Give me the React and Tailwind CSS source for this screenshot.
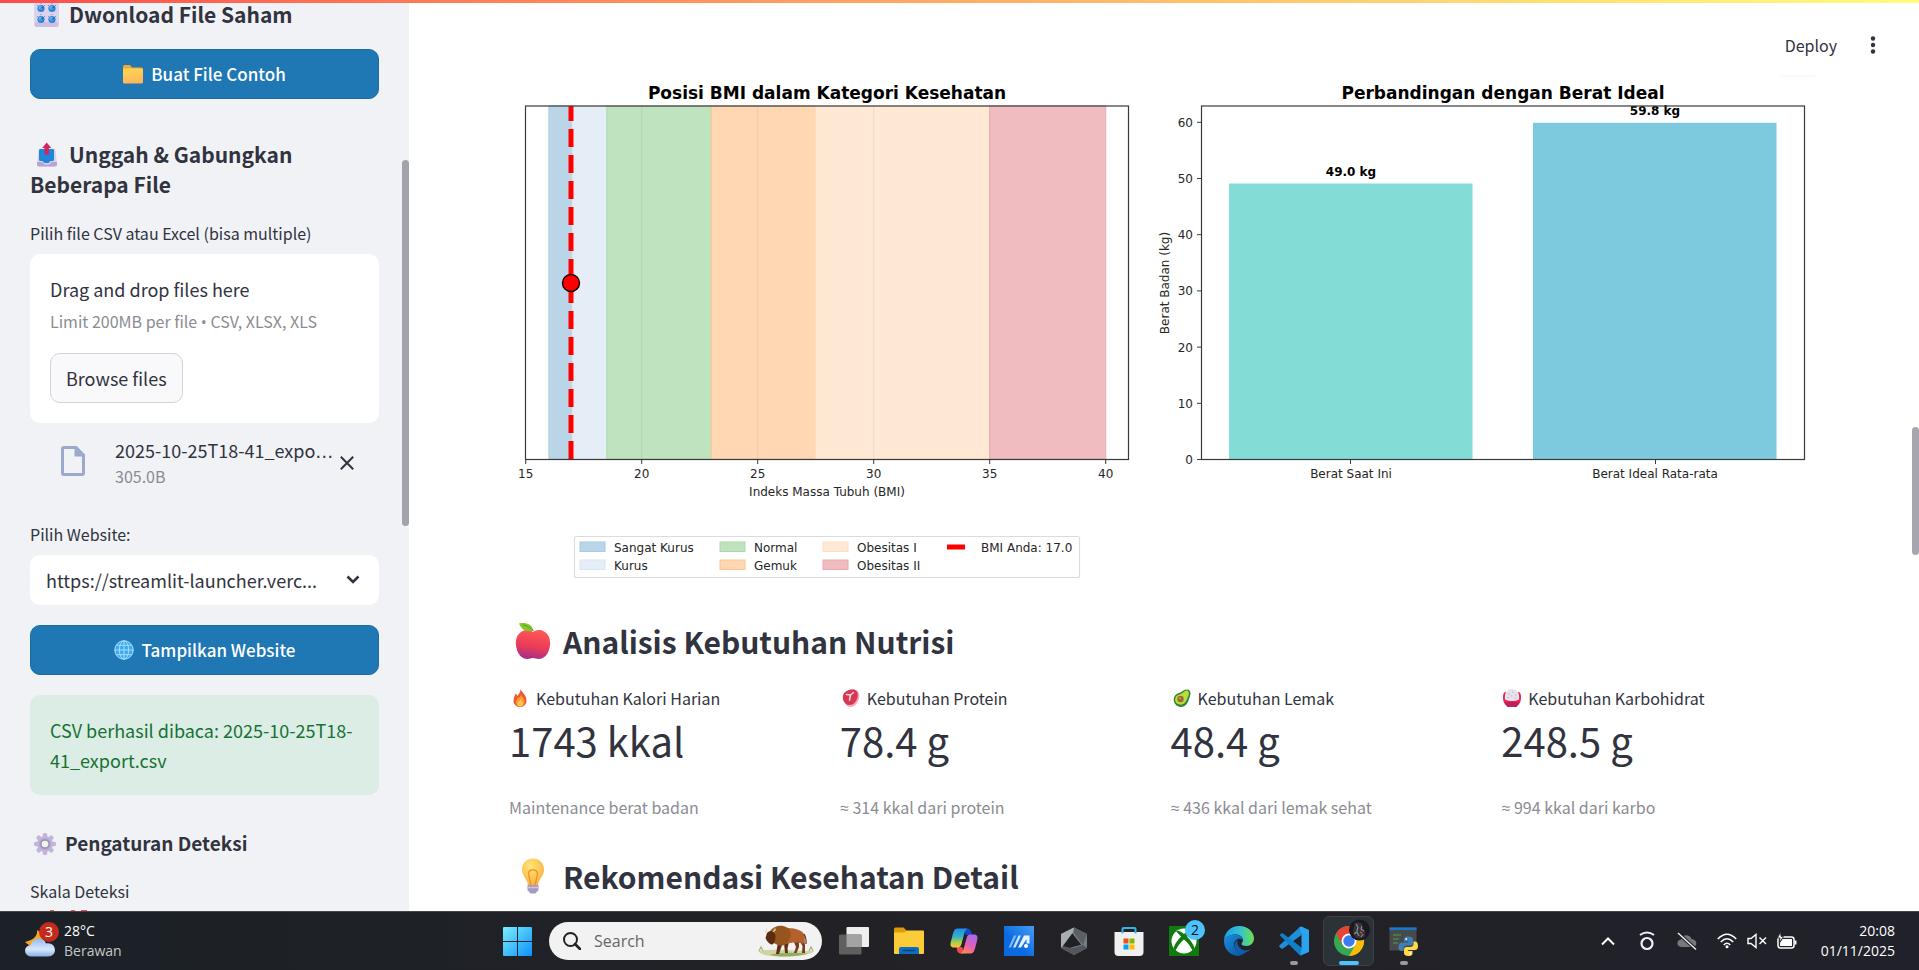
const sans = "font-['Noto_Sans_CJK_SC','Open_Sans',sans-serif]";
const segoe = "font-['Open_Sans','Noto_Sans',sans-serif]";

/* ---------- emoji drawings ---------- */

function KnobsIcon() {
  return (
    <svg viewBox="0 0 25 25" className="ml-1 mr-2.5 inline-block h-[25px] w-[25px] align-[-4px]" aria-hidden="true">
      <rect x="0" y="0" width="25" height="25" rx="3.5" fill="#ddd2ec" />
      <rect x="0.5" y="20" width="24" height="5" rx="2.5" fill="#cdbfe2" />
      {[[7, 6.5], [18, 6.5], [7, 17.5], [18, 17.5]].map(([x, y]) => (
        <g key={`${x}-${y}`}>
          <path d={`M${x - 4} ${y - 3.5}l1 1M${x} ${y - 5.5}v1.2M${x + 4} ${y - 3.5}l-1 1`} stroke="#8d80a5" strokeWidth="0.9" />
          <circle cx={x} cy={y} r="3.6" fill="#2e86d8" />
          <circle cx={x - 0.6} cy={y - 0.8} r="1.9" fill="#5bb3f3" />
          <path d={`M${x} ${y}l2 -2`} stroke="#123e78" strokeWidth="1" />
        </g>
      ))}
    </svg>
  );
}

function FolderIcon() {
  return (
    <svg viewBox="0 0 20 20" className="h-5 w-5" aria-hidden="true">
      <defs>
        <linearGradient id="folderFill" x1="0" y1="0" x2="0.3" y2="1">
          <stop offset="0" stopColor="#ffd84f" />
          <stop offset="1" stopColor="#fdb75a" />
        </linearGradient>
      </defs>
      <path d="M0 2.5Q0 1 1.5 1H7l2 2.5h9.500Q20 3.500 20 5V10H0z" fill="#f3a73a" />
      <path d="M0 5.500Q0 4.500 1.200 4.500H18.500Q20 4.500 20 6V18Q20 19.500 18.500 19.500H1.500Q0 19.500 0 18z" fill="url(#folderFill)" />
    </svg>
  );
}

function OutboxIcon() {
  return (
    <svg viewBox="0 0 25 25" className="ml-1 mr-2.5 inline-block h-[25px] w-[25px] align-[-4px]" aria-hidden="true">
      <path d="M4.500 8Q4.500 6.500 6 6.500H20Q21.500 6.500 21.500 8L23 22Q23 24.500 21 24.500H5Q3 24.500 3 22z" fill="#d9d3e6" />
      <path d="M3 20H8.500l2 2.500h5l2-2.500H23V22.500Q23 24.500 21 24.500H5Q3 24.500 3 22.500z" fill="#b9a2d8" />
      <path d="M5 8.500Q5 7 6.500 7H18.500Q20 7 20 8.500V17.500Q20 19 18.500 19H16.500L14.500 21H10.500L8.500 19H6.500Q5 19 5 17.500z" fill="#1f86d9" />
      <path d="M12.700 0.500L17.300 6H14.900V12.500H10.500V6H8.200z" fill="#d6245d" />
    </svg>
  );
}

function GlobeIcon() {
  return (
    <svg viewBox="0 0 20 20" className="h-5 w-5" aria-hidden="true">
      <circle cx="10" cy="10" r="10" fill="#2f8fdc" />
      <circle cx="10" cy="10" r="9" fill="#3fa9ee" />
      <g fill="none" stroke="#a5dcfb" strokeWidth="1">
        <circle cx="10" cy="10" r="9.200" />
        <ellipse cx="10" cy="10" rx="4.600" ry="9.200" />
        <path d="M10 .8V19.200M.8 10H19.200M2.500 5.300H17.500M2.500 14.700H17.500" />
      </g>
    </svg>
  );
}

function GearIcon() {
  return (
    <svg viewBox="0 0 22 22" className="ml-1 mr-[9px] inline-block h-[22px] w-[22px] align-[-4px]" aria-hidden="true">
      <g fill="#c3b4dc">
        {[0, 45, 90, 135, 180, 225, 270, 315].map((a) => (
          <rect key={a} x="8.800" y="0" width="4.400" height="6" rx="1.600" transform={`rotate(${a} 11 11)`} />
        ))}
        <circle cx="11" cy="11" r="8" />
      </g>
      <circle cx="11" cy="11" r="6" fill="#b3a7c8" />
      <circle cx="11" cy="11" r="4.800" fill="#9d93b0" />
      <circle cx="11" cy="11" r="3.300" fill="#f0f2f6" />
    </svg>
  );
}

function AppleIcon() {
  return (
    <svg viewBox="0 0 36 36" className="h-9 w-9" aria-hidden="true">
      <defs>
        <linearGradient id="appleFill" x1="0.600" y1="0" x2="0.400" y2="1">
          <stop offset="0" stopColor="#ff5a55" />
          <stop offset="0.600" stopColor="#e93a5a" />
          <stop offset="1" stopColor="#a22f8c" />
        </linearGradient>
      </defs>
      <path d="M18 9C21 6.500 26 6 30 9C35 12.500 36 19 34.500 25C33 32 28.500 36 24 36C21 36 20 35 18 35S15 36 12 36C7.500 36 3 32 1.500 25C0 19 1 12.500 6 9C10 6 15 6.500 18 9Z" fill="url(#appleFill)" />
      <path d="M4 0.500C10 -0.800 17 0.500 18.500 8C12 9 7 8 4 0.500Z" fill="#86c62f" />
      <path d="M8 2C13 3 16 5 18.500 8" stroke="#5f9d22" strokeWidth="1" fill="none" />
    </svg>
  );
}

function BulbIcon() {
  return (
    <svg viewBox="0 0 24 36" className="h-9 w-9" aria-hidden="true">
      <defs>
        <radialGradient id="bulbFill" cx="0.400" cy="0.300" r="0.750">
          <stop offset="0" stopColor="#ffe47a" />
          <stop offset="1" stopColor="#fbb03b" />
        </radialGradient>
      </defs>
      <path d="M12 0.500C18.500 0.500 23 5.300 23 11.500C23 18 18 20.500 17 27H7C6 20.500 1 18 1 11.500C1 5.300 5.500 0.500 12 0.500Z" fill="url(#bulbFill)" />
      <path d="M10 27L7.500 16C7.500 10.500 16.500 10.500 16.500 16L14 27" fill="none" stroke="#e8912b" strokeWidth="1.200" />
      <path d="M6.500 27H17.500V32Q17.500 33 16 33.500L14.500 35.500H9.500L8 33.500Q6.500 33 6.500 32z" fill="#a99abf" />
      <path d="M6.500 29.500H17.500" stroke="#cdc3dc" strokeWidth="1.500" />
    </svg>
  );
}

function FireIcon() {
  return (
    <svg viewBox="0 0 18 18" className="h-[18px] w-[18px]" aria-hidden="true">
      <path d="M9.500 0C10.500 3 15.500 6 15.500 11.500C15.500 15.500 12.500 18 9 18S2.500 15.500 2.500 11.500C2.500 8.500 4 7 4.500 4.500C5.500 5 6 6 6.200 7C8 5 9.500 3 9.500 0Z" fill="#ee5a33" />
      <path d="M10 5.500C10.500 8 14 9.500 13.500 13C13 16.500 11 17.500 9 17.500S5 16 5 13C5 11 6.500 10.500 6.800 8.500C8 9 9.500 8 10 5.500Z" fill="#fb9b3a" />
      <path d="M9.500 10C10 12 12 12.500 12 14.500C12 16.500 10.500 17.500 9 17.500S6.500 16.500 6.500 14.700C6.500 12.500 9 12.500 9.500 10Z" fill="#fcc84a" />
    </svg>
  );
}

function MeatIcon() {
  return (
    <svg viewBox="0 0 18 18" className="h-[18px] w-[18px]" aria-hidden="true">
      <path d="M2 8C2 3 7 0 12 0.500C16.500 1 18 4.500 17 9C16 14 12.500 18 8 18C4 18 2 13 2 8Z" fill="#f4a7b4" />
      <path d="M1 6.500C2 2.500 7 0 11 0.500C15 1 16.500 4 15.500 8C14.500 12.500 11.500 16 7.500 16C3 16 0 11 1 6.500Z" fill="#d93654" />
      <path d="M4.500 5.500L8.500 6L11.500 3.500M8.500 6L7.500 11" stroke="#fbdbe0" strokeWidth="1.600" fill="none" strokeLinecap="round" />
    </svg>
  );
}

function AvocadoIcon() {
  return (
    <svg viewBox="0 0 18 18" className="h-[18px] w-[18px]" aria-hidden="true">
      <path d="M14 0.500C17.500 0.500 18 4 17 7C16 10 15.500 12 14 14.500C12 18 7 19 3.500 16.500C0 13.500 0 8.500 2.500 6C5 4 7 4 9 2.500C10.500 1.300 12 0.500 14 0.500Z" fill="#2f7f35" />
      <path d="M13.300 1.500C16 1.500 16.500 4 15.500 6.500C14.500 9 14 11 12.500 13C10.500 15.800 7 16.500 4 14.500C1.500 12.500 1.500 9 3.500 7C5.500 5.200 8 5.200 10 3.500C11 2.500 12 1.500 13.300 1.500Z" fill="#b9dd3c" />
      <circle cx="7.500" cy="10" r="3.200" fill="#9a6a35" />
      <circle cx="7" cy="9.300" r="1.200" fill="#c08f56" />
    </svg>
  );
}

function RiceIcon() {
  return (
    <svg viewBox="0 0 18 18" className="h-[18px] w-[18px]" aria-hidden="true">
      <path d="M0 8C0 4.500 1 3 3 3H15C17 3 18 4.500 18 8C18 13 16.500 15 14.500 16.500Q14 18 12.500 18H5.500Q4 18 3.500 16.500C1.500 15 0 13 0 8Z" fill="#e8244f" />
      <path d="M1.500 13H16.500Q15.700 15.500 14.500 16.500Q14 18 12.500 18H5.500Q4 18 3.500 16.500Q2.200 15.500 1.500 13Z" fill="#bf2060" />
      <path d="M2 10.500C1 3.500 4.500 0 9 0S17 3.500 16 10.500Q13 12 9 12T2 10.500Z" fill="#e9e2ef" />
      <path d="M5 5h1.500M9 3h1.500M12 6h1.500M8 7h1.500M4.500 8.500h1.500M11.500 9h1.500" stroke="#b9aec8" strokeWidth="1" />
    </svg>
  );
}

/* ---------- sidebar ---------- */

function PrimaryButton({ icon, children }) {
  return (
    <button className="flex h-[50px] w-full items-center justify-center gap-2 rounded-[10px] border border-[#1c6ba2] bg-[#1f77b4] text-[17px] leading-[30px] font-medium text-white">
      {icon}
      {children}
    </button>
  );
}

function Sidebar() {
  return (
    <aside className="flex w-[409px] shrink-0 bg-[#f0f2f6] text-[#31333f]">
      <div className="-mt-px min-w-0 flex-1 pl-[30px] pr-[23px]">
        <h3 className="text-[21px] leading-[30px] font-bold"><KnobsIcon />Dwonload File Saham</h3>
        <div className="mt-5">
          <PrimaryButton icon={<FolderIcon />}>Buat File Contoh</PrimaryButton>
        </div>

        <h3 className="mt-10 text-[21px] leading-[30px] font-bold"><OutboxIcon />Unggah &amp; Gabungkan Beberapa File</h3>

        <p className="mt-[22px] text-base leading-6">Pilih file CSV atau Excel (bisa multiple)</p>
        <section className="mt-[9px] rounded-[10px] bg-white p-5">
          <p className="text-lg leading-[30px]">Drag and drop files here</p>
          <p className="mt-[5px] h-6 text-base leading-6 text-[#8b8c94]">Limit 200MB per file <span className={`leading-none ${segoe}`}>•</span> CSV, XLSX, XLS</p>
          <button className="mt-5 h-[50px] rounded-[10px] border border-[#d3d4d9] bg-[#f9f9fb] px-[15px] text-lg leading-[30px]">Browse files</button>
        </section>

        <div className="flex h-[99px] items-start pl-[31px] pr-[25px] pt-[13px]">
          <svg viewBox="0 0 24 30" className="mt-2.5 h-[30px] w-6 shrink-0" aria-hidden="true">
            <path d="M3 1.500H15L22.500 9V27Q22.500 28.500 21 28.500H3Q1.500 28.500 1.500 27V3Q1.500 1.500 3 1.500Z" fill="none" stroke="#9aa9cc" strokeWidth="3" />
            <path d="M13.500 0.500H15.500L24 9V10.500H13.500Z" fill="#9aa9cc" />
          </svg>
          <div className="ml-[30px] min-w-0 flex-1 whitespace-nowrap">
            <p className="h-7 text-lg leading-7">2025-10-25T18-41_expo<span className="leading-none font-['DejaVu_Sans',sans-serif]">…</span></p>
            <p className="text-base leading-6 text-[#8b8c94]">305.0B</p>
          </div>
          <button aria-label="Hapus file" className="mt-5 flex h-[14px] w-[14px] shrink-0">
            <svg viewBox="0 0 14 14" className="h-[14px] w-[14px]"><path d="M0.800 0.800L13.200 13.200M13.200 0.800L0.800 13.200" stroke="#31333f" strokeWidth="2" /></svg>
          </button>
        </div>

        <label htmlFor="website" className="block text-base leading-6">Pilih Website:</label>
        <div className="relative mt-[9px]">
          <select id="website" className="block h-[50px] w-full appearance-none rounded-[10px] bg-white pl-4 pr-12 text-lg leading-[30px]">
            <option>https://streamlit-launcher.verc...</option>
          </select>
          <svg viewBox="0 0 14 9" className="pointer-events-none absolute right-[19px] top-5 h-[9px] w-[14px]" aria-hidden="true">
            <path d="M1.500 1.500L7 7L12.500 1.500" fill="none" stroke="#31333f" strokeWidth="2.600" />
          </svg>
        </div>

        <div className="mt-5">
          <PrimaryButton icon={<GlobeIcon />}>Tampilkan Website</PrimaryButton>
        </div>

        <div className="mt-5 rounded-[10px] bg-[#dcede6] p-5">
          <p className="text-lg leading-[30px] text-[#177233]">CSV berhasil dibaca: 2025-10-25T18-41_export.csv</p>
        </div>

        <h4 className="mt-[33px] text-[19px] leading-[30px] font-bold"><GearIcon />Pengaturan Deteksi</h4>
        <label htmlFor="scale" className="mt-[21px] block text-base leading-6">Skala Deteksi</label>
        <svg viewBox="0 0 40 8" className="ml-5 mt-1.5 h-2 w-10" fill="#ff4b4b" aria-hidden="true">
          <path d="M0 1h4v7h-2v-6h-2zM21 1h4v7h-4zM31 1h6v7h-6z" />
        </svg>
        <input id="scale" type="range" min="1" max="2" step="0.1" defaultValue="1.1" className="mt-4 w-full accent-[#ff4b4b]" />
      </div>
      <div className="w-[7px] shrink-0 pt-40">
        <div className="h-[366px] rounded-full bg-[#a3a4ab]" />
      </div>
    </aside>
  );
}

/* ---------- charts ---------- */

const bmiX = (v) => 525.7 + (v - 15) * 23.2;
const bands = [
  { from: 16, to: 17, fill: "#bad4e8", edge: "#a9cbe4" },
  { from: 17, to: 18.5, fill: "#e5edf7", edge: "#dbe6f4" },
  { from: 18.5, to: 23, fill: "#bfe3bf", edge: "#a9d9a9" },
  { from: 23, to: 27.5, fill: "#ffd7b3", edge: "#fbc794" },
  { from: 27.5, to: 35, fill: "#ffe9d5", edge: "#ffdfc2" },
  { from: 35, to: 40, fill: "#f0bcbf", edge: "#ebaaae" },
];
const legend = [
  { x: 580, y: 542, t: "Sangat Kurus", b: 0 },
  { x: 580, y: 560, t: "Kurus", b: 1 },
  { x: 720, y: 542, t: "Normal", b: 2 },
  { x: 720, y: 560, t: "Gemuk", b: 3 },
  { x: 823, y: 542, t: "Obesitas I", b: 4 },
  { x: 823, y: 560, t: "Obesitas II", b: 5 },
];

function Charts() {
  return (
    <svg viewBox="509 75 1303 510" className="block w-full font-['DejaVu_Sans',sans-serif]" fill="#262626" fontSize="12" role="img" aria-label="Posisi BMI dan perbandingan berat">
      <text x="827" y="99" textAnchor="middle" fontSize="17" fontWeight="700" fill="#000">Posisi BMI dalam Kategori Kesehatan</text>
      {bands.map((b) => (
        <rect key={b.from} x={bmiX(b.from)} y="106" width={bmiX(b.to) - bmiX(b.from)} height="353" fill={b.fill} stroke={b.edge} strokeWidth="1" />
      ))}
      {[20, 25, 30].map((v) => (
        <path key={v} d={`M${bmiX(v)} 106V459`} stroke="#808080" strokeOpacity="0.150" />
      ))}
      <path d="M571 459V106" stroke="#ff0000" strokeWidth="5" strokeDasharray="18 8" />
      <circle cx="571" cy="283" r="8.500" fill="#ff0000" stroke="#1a0000" strokeWidth="1.400" />
      <rect x="525.500" y="106" width="603" height="353.500" fill="none" stroke="#3a3a3a" strokeWidth="1.200" />
      {[15, 20, 25, 30, 35, 40].map((v) => (
        <g key={v}>
          <path d={`M${bmiX(v)} 460v4`} stroke="#3a3a3a" />
          <text x={bmiX(v)} y="478" textAnchor="middle">{v}</text>
        </g>
      ))}
      <text x="827" y="496" textAnchor="middle">Indeks Massa Tubuh (BMI)</text>

      <rect x="574.500" y="536.500" width="505" height="41" rx="2" fill="#fff" stroke="#dcdcdc" strokeWidth="1.200" />
      {legend.map((l) => (
        <g key={l.t}>
          <rect x={l.x} y={l.y} width="25" height="9.500" fill={bands[l.b].fill} stroke={bands[l.b].edge} />
          <text x={l.x + 34} y={l.y + 9.500}>{l.t}</text>
        </g>
      ))}
      <path d="M947 547H965" stroke="#ff0000" strokeWidth="5" />
      <text x="981" y="551.500">BMI Anda: 17.0</text>

      <text x="1503" y="99" textAnchor="middle" fontSize="17" fontWeight="700" fill="#000">Perbandingan dengan Berat Ideal</text>
      <text x="1351" y="176" textAnchor="middle" fontWeight="700" fill="#000">49.0 kg</text>
      <text x="1655" y="115" textAnchor="middle" fontWeight="700" fill="#000">59.8 kg</text>
      <rect x="1229" y="183.500" width="243.500" height="276" fill="#83dcd5" />
      <rect x="1533" y="122.800" width="243.500" height="336.700" fill="#7dcade" />
      <rect x="1201.500" y="106" width="603" height="353.500" fill="none" stroke="#3a3a3a" strokeWidth="1.200" />
      {[0, 10, 20, 30, 40, 50, 60].map((v) => (
        <g key={v}>
          <path d={`M1197 ${459.5 - v * 5.62}h4.500`} stroke="#3a3a3a" />
          <text x="1193" y={464 - v * 5.62} textAnchor="end">{v}</text>
        </g>
      ))}
      <path d="M1350.500 460v4M1655.500 460v4" stroke="#3a3a3a" />
      <text x="1351" y="478" textAnchor="middle">Berat Saat Ini</text>
      <text x="1655" y="478" textAnchor="middle">Berat Ideal Rata-rata</text>
      <text transform="translate(1169 283) rotate(-90)" textAnchor="middle">Berat Badan (kg)</text>
    </svg>
  );
}

/* ---------- main panel ---------- */

const Approx = () => <span className={`leading-none ${segoe}`}>≈</span>;

const metrics = [
  { icon: <FireIcon />, label: "Kebutuhan Kalori Harian", value: "1743 kkal", note: "Maintenance berat badan" },
  { icon: <MeatIcon />, label: "Kebutuhan Protein", value: "78.4 g", note: <><Approx /> 314 kkal dari protein</> },
  { icon: <AvocadoIcon />, label: "Kebutuhan Lemak", value: "48.4 g", note: <><Approx /> 436 kkal dari lemak sehat</> },
  { icon: <RiceIcon />, label: "Kebutuhan Karbohidrat", value: "248.5 g", note: <><Approx /> 994 kkal dari karbo</> },
];

function MainPanel() {
  return (
    <main className="flex min-w-0 flex-1 bg-white text-[#31333f]">
      <div className="min-w-0 flex-1 px-[100px]">
        <header className="relative -mr-[68px] flex h-[75px] items-center justify-end gap-7 pt-[14px]">
          <button className="text-base leading-6">Deploy</button>
          <button aria-label="Menu" className="flex w-[15px] justify-center">
            <svg viewBox="0 0 6 18" className="h-[18px] w-1.5" fill="#31333f"><circle cx="3" cy="2.500" r="2.200" /><circle cx="3" cy="9" r="2.200" /><circle cx="3" cy="15.500" r="2.200" /></svg>
          </button>
          <span className="absolute right-16 top-[75px] h-1 w-9 rounded-b-full bg-linear-to-b from-[#f7f7f8] to-white" />
        </header>

        <Charts />

        <h2 className="mt-[35px] flex items-center gap-3 pl-1.5 text-[30px] leading-[42px] font-bold"><AppleIcon />Analisis Kebutuhan Nutrisi</h2>
        <div className="mt-6 grid grid-cols-4 gap-5">
          {metrics.map((m) => (
            <div key={m.label}>
              <p className="flex items-center gap-[7px] pl-0.5 text-base leading-6">{m.icon}{m.label}</p>
              <p className="mt-[3px] text-[40px] leading-[54px]">{m.value}</p>
              <p className="mt-7 h-6 text-base leading-6 text-[#8b8c94]">{m.note}</p>
            </div>
          ))}
        </div>
        <h2 className="mt-9 flex items-center gap-3 pl-1.5 text-[30px] leading-[42px] font-bold"><BulbIcon />Rekomendasi Kesehatan Detail</h2>
      </div>
      <div className="w-[7px] shrink-0 pt-[427px]">
        <div className="h-32 rounded-full bg-[#a6a7ae]" />
      </div>
    </main>
  );
}

/* ---------- taskbar ---------- */

function Weather() {
  return (
    <svg viewBox="0 0 34 38" className="h-[38px] w-[34px]" aria-hidden="true">
      <defs>
        <linearGradient id="cloudFill" x1="0" y1="0" x2="0" y2="1">
          <stop offset="0" stopColor="#8fb8f4" />
          <stop offset="0.600" stopColor="#dbe8fb" />
          <stop offset="1" stopColor="#8aaeea" />
        </linearGradient>
      </defs>
      <path d="M12 8C13 13 9 18 0 20C3 23 7 25 11 25C20 25 23 14 12 8Z" fill="#f6a621" />
      <path d="M7 34.500C-2 34.500 -2 23.500 6 23C7 15 19 14 21 21.500C32 19.500 33 34.500 23 34.500Z" fill="url(#cloudFill)" />
      <circle cx="24" cy="10" r="10" fill="#c42b1c" />
      <text x="24" y="15" textAnchor="middle" fontSize="14" fill="#fff">3</text>
    </svg>
  );
}

function Bison() {
  return (
    <svg viewBox="0 0 56 32" className="h-8 w-14" aria-hidden="true">
      <path d="M0 26Q10 24 28 25T56 26Q52 31 28 31.500T0 26Z" fill="#cfd3a6" />
      <path d="M12 29.500Q28 26.500 50 28.500Q40 31.500 28 31.500T12 29.500Z" fill="#8fae62" />
      <path d="M1 26l2-4 2 4M51 26l2-4 2 4" stroke="#a9b877" strokeWidth="1.300" fill="none" />
      <path d="M20 17L19 23L18 29H21L23 23L25 17ZM26 18L27 28H30L29.500 23L31 17Z" fill="#5e2f14" />
      <path d="M36 17L38 22L36 28H38.500L41 22V16ZM41 15L44.500 21L44 28H47L47 20L46 13Z" fill="#7c3c1b" />
      <path d="M27 3C35 3 43 4 46 9C47.500 13 47 16 45 19C41 17 34 17 28 19Z" fill="#b5602f" />
      <path d="M12 6C16 1 23 -1 29 2.500C35 6 33 15 28 19C24 22 19 20 16 18C13 16 10 11 12 6Z" fill="#96551f" />
      <path d="M9 8C12 4 18 7 17.500 12C17.500 15 16 20 13.500 19.500C11.500 19 8.500 16 7.500 13Z" fill="#5c2c12" />
      <path d="M9 8Q7 6 9 3.500M15 6.500Q17.500 6 17 3.500" stroke="#eadbbd" strokeWidth="1.200" fill="none" />
      <path d="M46 9Q48.500 13 48 19" stroke="#5e2f14" strokeWidth="1.200" fill="none" />
    </svg>
  );
}

function TaskViewIcon() {
  return (
    <svg viewBox="0 0 30 30" className="h-[30px] w-[30px]">
      <rect x="7.500" y="1" width="22.500" height="20" rx="1" fill="#efefef" />
      <rect x="0" y="8.500" width="22.500" height="20" rx="1" fill="#5f5f5f" />
      <rect x="7.500" y="8.500" width="15" height="12.500" fill="#a3a3a3" />
    </svg>
  );
}

function ExplorerIcon() {
  return (
    <svg viewBox="0 0 30 30" className="h-[30px] w-[30px]">
      <path d="M0 3Q0 1.500 1.500 1.500H9.500L13 5V9H0z" fill="#dc9c07" />
      <path d="M0 6.500H10L13 4.500H29Q30 4.500 30 5.500V27Q30 28 29 28H1Q0 28 0 27z" fill="#fbcb38" />
      <path d="M5 28V23Q5 21 7 21H23Q25 21 25 23V28z" fill="#0a6fc4" />
      <path d="M9 24.500H21" stroke="#0a3f78" strokeWidth="1.400" strokeLinecap="round" />
    </svg>
  );
}

function CopilotIcon() {
  return (
    <svg viewBox="0 0 30 30" className="h-[30px] w-[30px]">
      <defs>
        <linearGradient id="copLeft" x1="0" y1="0" x2="0" y2="1">
          <stop offset="0" stopColor="#1f8cf0" />
          <stop offset="0.450" stopColor="#38b5c0" />
          <stop offset="0.750" stopColor="#b5cf3e" />
          <stop offset="1" stopColor="#f9c63b" />
        </linearGradient>
        <linearGradient id="copRight" x1="0.700" y1="0" x2="0.200" y2="1">
          <stop offset="0" stopColor="#a769ee" />
          <stop offset="0.550" stopColor="#e560b0" />
          <stop offset="1" stopColor="#ff8a50" />
        </linearGradient>
      </defs>
      <path d="M18 2.500C20.500 2.500 21.500 3.500 22.200 6L23 9H17L14 3z" fill="#1647c9" />
      <path d="M12 27.500C9.500 27.500 8.500 26 8 24L7.500 21H13L16 27z" fill="#ee4a54" />
      <path d="M8.500 2.500H18.500C16.500 3.500 15.700 5.500 15 8.500L12.500 18C11.800 20.500 10.500 21.500 8.500 21.500H5C1.500 21.500 1 19 1.800 16L4 7.500C5 4 6 2.500 8.500 2.500Z" fill="url(#copLeft)" />
      <path d="M21.500 27.500H11.500C13.500 26.500 14.300 24.500 15 21.500L17.500 12C18.200 9.500 19.500 8.500 21.500 8.500H25C28.500 8.500 29 11 28.200 14L26 22.500C25 26 24 27.500 21.500 27.500Z" fill="url(#copRight)" />
      <path d="M15 10.500H17.800L15 20.500H12.200Z" fill="#23242b" />
    </svg>
  );
}

function MyAsusIcon() {
  return (
    <svg viewBox="0 0 30 30" className="h-[30px] w-[30px]">
      <defs>
        <linearGradient id="asusBg" x1="0" y1="1" x2="1" y2="0">
          <stop offset="0.400" stopColor="#0a6be0" />
          <stop offset="1" stopColor="#4a9bf5" />
        </linearGradient>
      </defs>
      <rect width="30" height="30" fill="url(#asusBg)" />
      <path d="M4.500 21.500L10 9.500H12.500L7 21.500z" fill="#7db6f7" />
      <path d="M9 21.500L14.500 9.500H17L11.500 21.500z" fill="#cfe4fd" />
      <path d="M14 21.500L20 9.500H25.500V17.500H22.500V13L17 21.500z" fill="#e8f3ff" />
      <circle cx="22" cy="20" r="2" fill="#fff" />
    </svg>
  );
}

function HexIcon() {
  return (
    <svg viewBox="0 0 30 30" className="h-[30px] w-[30px]">
      <path d="M15 1.500L28 8V22L15 29L2 22V8z" fill="#777c82" />
      <path d="M15 1.500L28 8L24 19L14 6z" fill="#5b6066" />
      <path d="M15 1.500L2 8V22L14 7z" fill="#a7adb3" />
      <path d="M2 22L15 29L28 22L24 19H6z" fill="#53575d" />
      <path d="M13.500 7L23 19L12 22L4 20z" fill="#1f2124" />
      <path d="M13.500 7L23 19L12 22" stroke="#888d93" strokeWidth="0.800" fill="none" />
    </svg>
  );
}

function StoreIcon() {
  return (
    <svg viewBox="0 0 30 30" className="h-[30px] w-[30px]">
      <path d="M0.500 6H29.500V26Q29.500 30 25.500 30H4.500Q0.500 30 0.500 26z" fill="#f0f0f0" />
      <path d="M8.500 7.500V3Q8.500 2 9.500 2H20.500Q21.500 2 21.500 3V7.500" fill="none" stroke="#35b3e6" strokeWidth="2" />
      <rect x="9.500" y="12.500" width="5" height="5" fill="#f04f1c" />
      <rect x="15.500" y="12.500" width="5" height="5" fill="#7fba00" />
      <rect x="9.500" y="18.500" width="5" height="5" fill="#00a3ee" />
      <rect x="15.500" y="18.500" width="5" height="5" fill="#ffb900" />
    </svg>
  );
}

function XboxIcon() {
  return (
    <svg viewBox="0 0 30 30" className="h-[30px] w-[30px] overflow-visible">
      <rect width="30" height="30" rx="1" fill="#107c10" />
      <circle cx="15" cy="15" r="12.500" fill="#fff" />
      <path d="M7 5Q10 4 15 8Q20 4 23 5Q21 7.500 18 10.500Q24 17 25.500 22L23.500 24.500Q20 17.500 15 13.500Q10 17.500 6.500 24.500L4.500 22Q6 17 12 10.500Q9 7.500 7 5Z" fill="#107c10" />
      <circle cx="26" cy="4" r="10" fill="#4cc2ff" />
      <text x="26" y="9" textAnchor="middle" fontSize="14" fill="#111">2</text>
    </svg>
  );
}

function EdgeIcon() {
  return (
    <svg viewBox="0 0 30 30" className="h-[30px] w-[30px]">
      <defs>
        <linearGradient id="edgeTop" x1="0" y1="0.500" x2="1" y2="0.500">
          <stop offset="0" stopColor="#1b9de0" />
          <stop offset="0.500" stopColor="#2fc0d8" />
          <stop offset="1" stopColor="#6be04c" />
        </linearGradient>
        <linearGradient id="edgeLow" x1="0" y1="0" x2="1" y2="1">
          <stop offset="0" stopColor="#1b8fdd" />
          <stop offset="1" stopColor="#0b4f9f" />
        </linearGradient>
      </defs>
      <path d="M0 14C0.500 6 7 0 15 0C24 0 30 6 30 12.500C30 17 26.500 20 22.500 20C19.500 20 17.500 19 17.500 18C17.500 17 19 16.500 19 14C19 11 16 8.500 11.500 8.500C6 8.500 1.500 11 0 14Z" fill="url(#edgeTop)" />
      <path d="M0 15C0 11 5 8.500 11 8.500C15.500 8.500 19 11 19 14C15 11 10 14 10 18.500C10 24 15 27.500 21 27C18 29 16 30 14 30C6 29.500 0 23 0 15Z" fill="url(#edgeLow)" />
      <path d="M13.500 14C10.500 16 9.500 20 11.500 23.500C14 28 20 29.500 27 23C23 25 19 25 16 22C13.500 19.500 13 17 13.500 14Z" fill="#0f5fae" />
    </svg>
  );
}

function VsCodeIcon() {
  return (
    <svg viewBox="0 0 30 30" className="h-[30px] w-[30px]">
      <path d="M21.500 0.500L22.500 9L4 22.500Q3 23 2.200 22.400L0.600 21Q-0.200 20 0.600 19.200z" fill="#1d8fdb" />
      <path d="M0.600 9L2.200 7.500Q3 7 4 7.500L22.500 21.500V29.800L20.500 29z" fill="#1080ca" />
      <path d="M22.500 8.500V21.500L21.500 29.500L30 26V4L22.500 0.500L20.500 1z" fill="#2ba4f0" />
    </svg>
  );
}

function ChromeIcon() {
  return (
    <svg viewBox="0 0 30 30" className="h-[30px] w-[30px] overflow-visible">
      <circle cx="15" cy="15" r="15" fill="#34a853" />
      <path d="M15 15L2 7.500A15 15 0 0 1 28 7.500H15z" fill="#ea4335" />
      <path d="M15 7.500H28A15 15 0 0 1 15 30L21.500 18.700z" fill="#fbbc05" />
      <path d="M2 7.500L8.500 18.800L15 15z" fill="#ea4335" />
      <circle cx="15" cy="15" r="7.500" fill="#fff" />
      <circle cx="15" cy="15" r="5.700" fill="#3b7df0" />
      <circle cx="25.500" cy="4" r="10.500" fill="#1b1b1f" />
      <path d="M21 -3Q24 -5 28 -2V2L31 5V10Q26 14 21 11L19 5z" fill="#34353a" />
      <path d="M22 -2l2 3-1 4M28 0l-1 3 3 2M20 8l3-2 2 4M29 8l-2 3" stroke="#8a8b90" strokeWidth="1.200" fill="none" />
      <path d="M26 6l2 1" stroke="#c0473f" strokeWidth="1.400" />
    </svg>
  );
}

function PythonConsoleIcon() {
  return (
    <svg viewBox="0 0 30 30" className="h-[30px] w-[30px]">
      <rect x="0.500" y="1.500" width="27" height="23" fill="#4a4a4a" />
      <rect x="0.500" y="1.500" width="27" height="2.500" fill="#1477d0" />
      <path d="M4 9h8M4 13h6M4 17h5" stroke="#3fa34a" strokeWidth="1.200" />
      <path d="M19 10.500C15.500 10.500 15 12 15 13.500V15.500H19.500V16.500H13C10.500 16.500 9.500 18.500 9.500 21S10.500 25 12.500 25H14.500V22.500C14.500 20.500 16 19.500 17.500 19.500H21.500C23 19.500 24 18.500 24 17V13.500C24 11.500 22.500 10.500 19 10.500Z" fill="#3d7fb8" />
      <path d="M19.500 30C23 30 23.500 28.500 23.500 27V25H19V24H25.500C28 24 29 22.500 29 20S28 15.500 26 15.500H24.500V18C24.500 20 23 21 21.500 21H17.500C16 21 15 22 15 23.500V27C15 29 16.500 30 19.500 30Z" fill="#ffd94c" />
      <circle cx="17.200" cy="13" r="0.900" fill="#fff" />
      <circle cx="21.500" cy="27.500" r="0.900" fill="#fff" />
    </svg>
  );
}

const apps = [
  { name: "Tampilan Tugas", icon: <TaskViewIcon /> },
  { name: "File Explorer", icon: <ExplorerIcon /> },
  { name: "Copilot", icon: <CopilotIcon /> },
  { name: "MyASUS", icon: <MyAsusIcon /> },
  { name: "Armoury Crate", icon: <HexIcon /> },
  { name: "Microsoft Store", icon: <StoreIcon /> },
  { name: "Xbox", icon: <XboxIcon /> },
  { name: "Edge", icon: <EdgeIcon /> },
  { name: "Visual Studio Code", icon: <VsCodeIcon />, state: "open" },
  { name: "Chrome", icon: <ChromeIcon />, state: "active" },
  { name: "Python", icon: <PythonConsoleIcon />, state: "open" },
];

function AppButton({ app }) {
  const active = app.state === "active";
  return (
    <button
      aria-label={app.name}
      className={
        active
          ? "relative mx-[2px] flex h-[50px] w-[51px] items-center justify-center rounded-md border border-[#3a4148] bg-[#2b3238]"
          : "relative flex h-[50px] w-[55px] items-center justify-center"
      }
    >
      {app.icon}
      {app.state === "open" && <span className="absolute bottom-px h-1 w-2 rounded-full bg-[#9a9a9e]" />}
      {active && <span className="absolute bottom-0 h-1 w-5 rounded-full bg-[#4cc2ff]" />}
    </button>
  );
}

function Taskbar() {
  return (
    <footer className={`grid h-[59px] shrink-0 grid-cols-[1fr_auto_1fr] items-center border-t border-[#43474b] bg-linear-to-r from-[#1b2127] via-[#232226] to-[#20212a] text-sm text-white ${segoe}`}>
      <div className="flex items-center pl-[25px]">
        <Weather />
        <div className="ml-[5px] leading-5">
          <p>28°C</p>
          <p className="text-[#c5c6c8]">Berawan</p>
        </div>
      </div>

      <div className="flex items-center pl-0.5">
        <button aria-label="Mulai" className="flex h-[50px] w-[55px] items-center justify-center">
          <svg viewBox="0 0 29 29" className="h-[29px] w-[29px]">
            <defs>
              <linearGradient id="winFill" x1="0" y1="0" x2="29" y2="29" gradientUnits="userSpaceOnUse">
                <stop offset="0" stopColor="#7beefc" />
                <stop offset="1" stopColor="#0b90fb" />
              </linearGradient>
            </defs>
            <path d="M1 0H14V14H0V1Q0 0 1 0ZM15 0H28Q29 0 29 1V14H15ZM0 15H14V29H1Q0 29 0 28ZM15 15H29V28Q29 29 28 29H15Z" fill="url(#winFill)" />
          </svg>
        </button>
        <label className="mx-1 flex h-[38px] w-[273px] items-center rounded-full bg-[#f2f2f2] pl-3.5 pr-2">
          <svg viewBox="0 0 18 18" className="h-[18px] w-[18px] shrink-0" fill="none" stroke="#222" aria-hidden="true">
            <circle cx="7.500" cy="7.500" r="6.500" strokeWidth="2" />
            <path d="M12 12L17 17" strokeWidth="2.600" strokeLinecap="round" />
          </svg>
          <input type="search" placeholder="Search" aria-label="Search" className="ml-[13px] min-w-0 flex-1 bg-transparent text-base text-[#222] placeholder:text-[#666] focus:outline-none" />
          <Bison />
        </label>
        {apps.map((app) => <AppButton key={app.name} app={app} />)}
      </div>

      <div className="flex items-center justify-end pr-6">
        <svg viewBox="0 0 14 9" className="h-[9px] w-[14px]" aria-hidden="true"><path d="M1 7.500L7 1.500L13 7.500" fill="none" stroke="#fff" strokeWidth="2" /></svg>
        <svg viewBox="0 0 16 20" className="ml-6 h-5 w-4" fill="none" stroke="#e8f0ff" aria-hidden="true">
          <path d="M1 4Q8 -1 15 4" strokeWidth="2" />
          <circle cx="8" cy="12.500" r="5.500" strokeWidth="2.200" />
        </svg>
        <svg viewBox="0 0 20 20" className="ml-[22px] h-5 w-5" aria-hidden="true">
          <path d="M5 16C-1 16 -1 9 4 8.500C5 3 13 3 14.500 8C20.500 8 21 16 15.500 16Z" fill="#77787c" />
          <path d="M1 2L19 18.500" stroke="#232226" strokeWidth="3.500" />
          <path d="M1 2L19 18.500" stroke="#f0f0f0" strokeWidth="1.400" />
        </svg>
        <svg viewBox="0 0 20 16" className="ml-5 h-4 w-5" fill="none" stroke="#fff" strokeWidth="1.600" aria-hidden="true">
          <path d="M0.800 6Q10 -3.500 19.200 6M3.800 9Q10 2.500 16.200 9M6.800 12Q10 8.500 13.200 12" />
          <circle cx="10" cy="13.800" r="1.500" fill="#fff" stroke="none" />
        </svg>
        <svg viewBox="0 0 20 16" className="ml-2.5 h-4 w-5" fill="none" stroke="#fff" strokeWidth="1.400" aria-hidden="true">
          <path d="M1 5.500H4L9 1.500V14.500L4 10.500H1zM12.500 4.500L19 11M19 4.500L12.500 11" />
        </svg>
        <svg viewBox="0 0 20 18" className="ml-2.5 h-[18px] w-5" aria-hidden="true">
          <rect x="1" y="5" width="16" height="11" rx="2.500" fill="none" stroke="#fff" strokeWidth="1.500" />
          <path d="M5.500 7H15V14H3V11z" fill="#fff" />
          <path d="M18.500 8.500v4" stroke="#fff" strokeWidth="2" />
          <path d="M3.500 0L0.500 6H3L2.500 10.500L6.500 4.500H4z" fill="#fff" stroke="#232226" strokeWidth="0.800" />
        </svg>
        <div className="ml-6 text-right leading-5">
          <p>20:08</p>
          <p>01/11/2025</p>
        </div>
      </div>
    </footer>
  );
}

export default function App() {
  return (
    <div className={`flex h-screen flex-col overflow-hidden ${sans}`}>
      <div className="relative flex min-h-0 flex-1 overflow-hidden">
        <div className="absolute inset-x-0 top-0 z-10 h-[3px] bg-linear-to-r from-[#ff4b4b] to-[#fffd80]" />
        <Sidebar />
        <MainPanel />
      </div>
      <Taskbar />
    </div>
  );
}
